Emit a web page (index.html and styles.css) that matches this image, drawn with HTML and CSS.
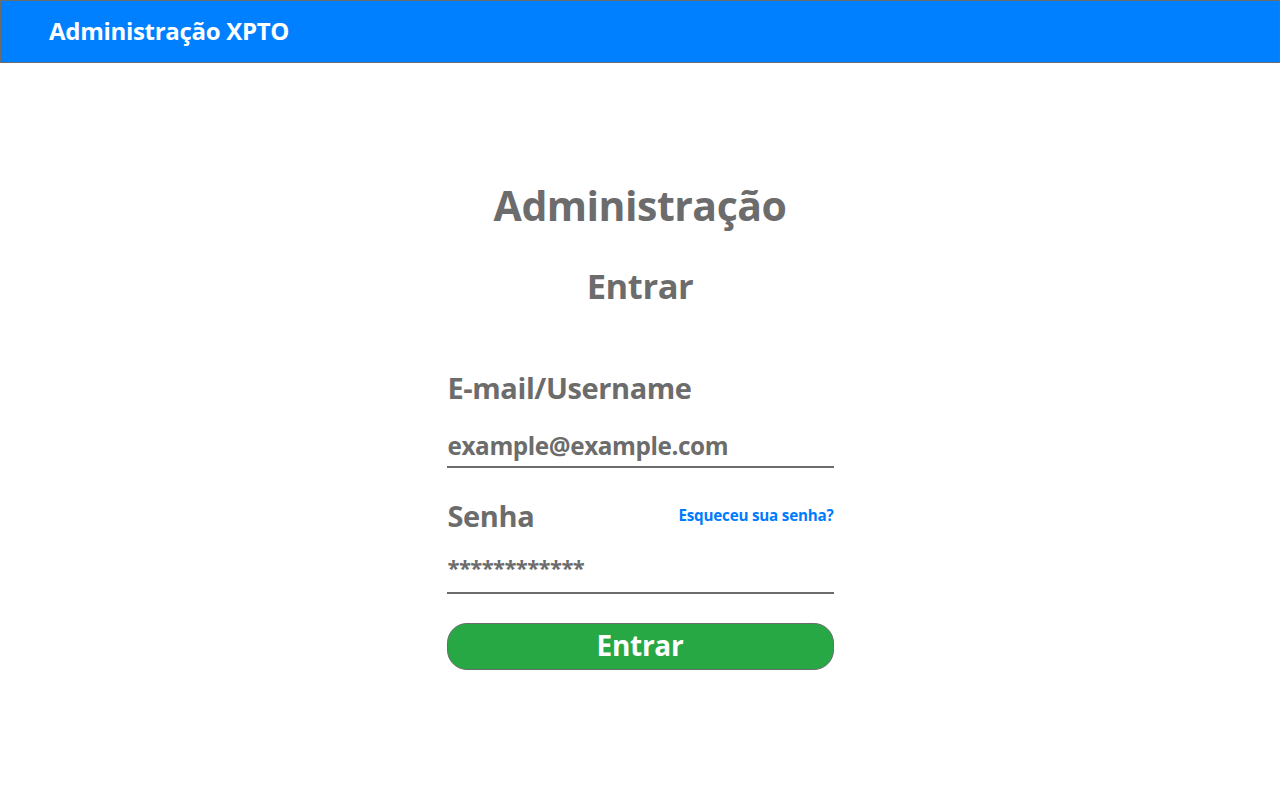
FILE: index.html
```html
<!DOCTYPE html>
<html lang="pt">
<head>
<meta charset="utf-8">
<title>Administração XPTO</title>
<link rel="stylesheet" href="styles.css">
</head>
<body>
<header class="topbar">
  <span class="brand">Administração XPTO</span>
</header>
<main class="page">
  <h1 class="title">Administração</h1>
  <h2 class="subtitle">Entrar</h2>
  <form class="form">
    <div class="field">
      <div class="label-row"><label class="label">E-mail/Username</label></div>
      <div class="input">example@example.com</div>
    </div>
    <div class="field field-pass">
      <div class="label-row">
        <label class="label">Senha</label>
        <a class="forgot" href="#">Esqueceu sua senha?</a>
      </div>
      <div class="input input-pass">************</div>
    </div>
    <button type="button" class="btn">Entrar</button>
  </form>
</main>
</body>
</html>
```
FILE: styles.css
```css
* { box-sizing: border-box; }
html, body { margin: 0; padding: 0; background: #fff; }
body {
  font-family: "Open Sans", "Noto Sans", sans-serif;
  font-weight: 700;
  color: #6c6c6c;
  width: 1280px;
  height: 800px;
  overflow: hidden;
}
.topbar {
  height: 63px;
  background: #0080ff;
  border: 1px solid #6c6c6c;
  display: flex;
  align-items: center;
  padding-left: 48px;
}
.brand {
  color: #fff;
  font-size: 24px;
  letter-spacing: -0.3px;
  line-height: 1;
  padding-bottom: 2px;
}
.page {
  display: flex;
  flex-direction: column;
  align-items: center;
}
.title {
  margin: 116px 0 0;
  font-size: 41px;
  line-height: 52px;
  letter-spacing: -0.5px;
  font-weight: 700;
}
.subtitle {
  margin: 33px 0 0;
  font-size: 34.5px;
  line-height: 44px;
  letter-spacing: -0.4px;
  font-weight: 700;
}
.form {
  width: 387px;
  margin-top: 58px;
  display: flex;
  flex-direction: column;
}
.label-row {
  display: flex;
  justify-content: space-between;
  align-items: center;
  height: 42px;
}
.label {
  font-size: 29px;
  letter-spacing: -0.4px;
  padding-left: 1px;
}
.forgot {
  color: #007bff;
  font-size: 15.2px;
  letter-spacing: -0.2px;
  text-decoration: none;
}
.input {
  margin-top: 17px;
  height: 43px;
  font-size: 24.3px;
  letter-spacing: -0.4px;
  line-height: 42px;
  padding-left: 1px;
  border-bottom: 2px solid #6c6c6c;
}
.field-pass { margin-top: 26px; }
.input-pass {
  margin-top: 7px;
  height: 51px;
  line-height: 48px;
  font-size: 22px;
  letter-spacing: -0.6px;
}
.btn {
  margin-top: 29px;
  height: 47px;
  border-radius: 20px;
  background: #28a745;
  border: 1px solid #6c6c6c;
  color: #fff;
  font-family: inherit;
  font-weight: 700;
  font-size: 28px;
  letter-spacing: -0.3px;
  line-height: 1;
  padding: 0 0 3px;
}
```
